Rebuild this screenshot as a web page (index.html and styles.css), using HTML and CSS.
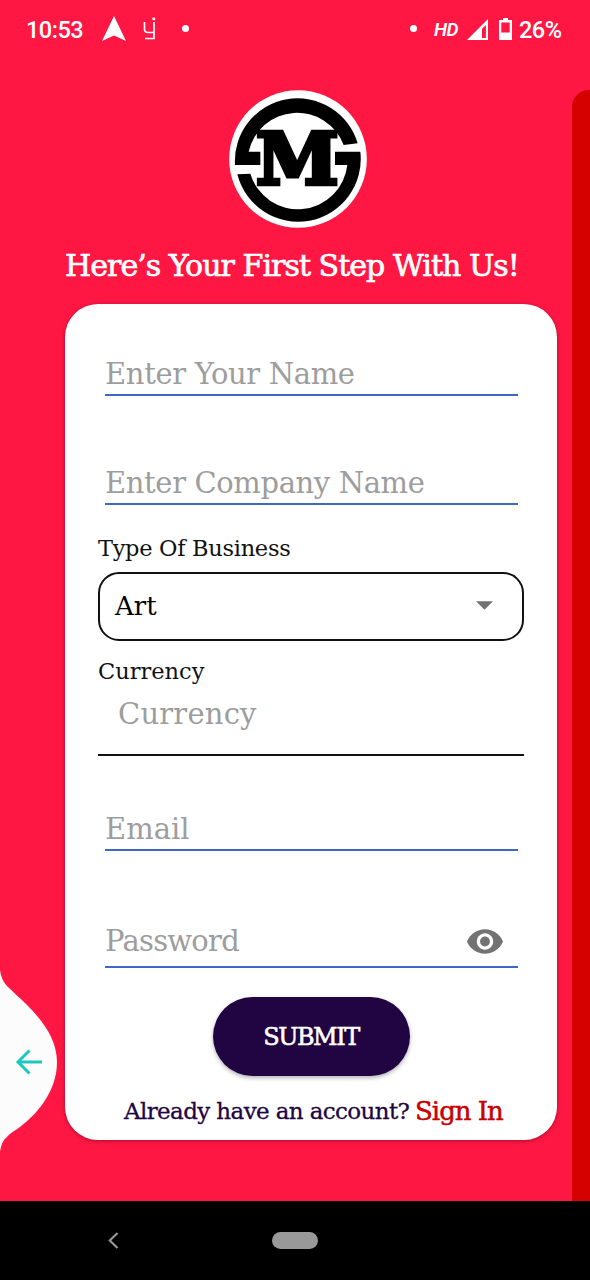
FILE: index.html
```html
<!DOCTYPE html>
<html lang="en">
<head>
<meta charset="utf-8">
<title>Sign Up</title>
<link rel="stylesheet" href="styles.css">
</head>
<body>
<div class="screen">
  <header class="status">
    <span class="clock">10:53</span>
    <svg class="nav-icon" viewBox="0 0 26 26"><path d="M13 0 25 25 13 19.500 1 25Z" fill="#fff"/></svg>
    <svg class="app-icon" viewBox="0 0 14 24" fill="none" stroke="#fff" stroke-width="1.700"><path d="M1.500 5V12Q1.500 15.500 5 15.500H11M11 5V21.500H2"/><circle cx="10.800" cy="1.800" r="1.500" fill="#fff" stroke="none"/></svg>
    <span class="dot"></span>
    <span class="spacer"></span>
    <span class="dot"></span>
    <span class="hd">HD</span>
    <svg class="signal" viewBox="0 0 21 21"><path d="M21 0V21H0Z" fill="#fff"/><path d="M18.900 6V18.900H15V9.800Z" fill="#ff1744"/></svg>
    <svg class="battery" viewBox="0 0 13 22"><path d="M4 0H9V2H13V22H0V2H4Z" fill="#fff"/><path d="M2.300 4.500H10.700V14.500H2.300Z" fill="#ff1744"/></svg>
    <span class="percent">26%</span>
  </header>
  <div class="body">
    <main class="main">
      <svg class="logo" viewBox="28 30 414 414">
        <circle cx="235" cy="237" r="206.500" fill="#fff"/>
        <path d="M414 190A188 188 0 0 0 46 255H122V215H87A149 149 0 0 1 372 195Z"/>
        <path d="M53 283A188 188 0 0 0 422 215H346V255H383A149 149 0 0 1 92 281Z"/>
        <text class="logo-letter" x="109" y="313" textLength="248" lengthAdjust="spacingAndGlyphs">M</text>
      </svg>
      <h1 class="title"><span>Here’s Your First Step With Us!</span></h1>
      <form class="card">
        <div class="field name"><span class="ph t-name">Enter Your Name</span></div>
        <div class="field company"><span class="ph t-company">Enter Company Name</span></div>
        <div class="label business"><span>Type Of Business</span></div>
        <div class="select"><span>Art</span><svg viewBox="0 0 16 8"><path d="M0 0H16L8 8Z" fill="#737373"/></svg></div>
        <div class="label currency-label"><span>Currency</span></div>
        <div class="currency"><span class="ph t-currency">Currency</span></div>
        <div class="field email"><span class="ph t-email">Email</span></div>
        <div class="field password"><span class="ph t-password">Password</span>
          <svg class="eye" viewBox="1 4.500 22 15"><path fill="#737373" d="M12 4.500C7 4.500 2.730 7.610 1 12c1.730 4.390 6 7.500 11 7.500s9.270-3.110 11-7.500c-1.730-4.390-6-7.500-11-7.500zM12 17c-2.760 0-5-2.240-5-5s2.240-5 5-5 5 2.240 5 5-2.240 5-5 5zm0-8c-1.660 0-3 1.340-3 3s1.340 3 3 3 3-1.340 3-3-1.340-3-3-3z"/></svg>
        </div>
        <div class="submit"><span>SUBMIT</span></div>
        <div class="foot"><span class="already">Already have an account?</span><span class="signin">Sign In</span></div>
      </form>
    </main>
    <aside class="strip"></aside>
  </div>
  <nav class="navbar">
    <svg class="back" viewBox="0 0 10 16"><path d="M8.800 1 1.500 8 8.800 15" fill="none" stroke="#999" stroke-width="2"/></svg>
    <span class="home"></span>
  </nav>
  <svg class="swipe" viewBox="0 0 60 184"><path d="M0 0C1 8 4 13 8 17C14 23 20 28 27 35C42 50 57 69 57 92C57 122 36 145 20 157C13 162 9 164 7 167C2 171 1 176 0 182Z" fill="#fcfcfc"/><path d="M42 92H18M29.500 80.500 18 92 29.500 103.500" fill="none" stroke="#1cc8bd" stroke-width="3"/></svg>
</div>
</body>
</html>
```
FILE: styles.css
```css
* { box-sizing: border-box; }
body { margin: 0; }
.screen {
  position: relative;
  width: 590px;
  height: 1280px;
  display: flex;
  flex-direction: column;
  overflow: hidden;
  background: #ff1744;
  font-family: "DejaVu Serif", serif;
  white-space: nowrap;
}
.screen svg { display: block; flex: none; }

.status {
  height: 90px;
  padding: 0 28px 30px 26px;
  display: flex;
  align-items: center;
  color: #fff;
  font: 500 24px Roboto, sans-serif;
}
.clock { width: 75px; font-size: 23.500px; letter-spacing: -0.500px; }
.nav-icon { width: 26px; height: 26px; margin-top: -3px; }
.app-icon { width: 14px; height: 24px; margin: -3px 0 0 16px; }
.dot { width: 7px; height: 7px; border-radius: 50%; background: #fff; margin: -3px 0 0 25px; }
.spacer { flex: 1; }
.hd { margin-left: 17px; font-size: 19px; font-weight: 600; font-style: italic; width: 33px; margin-top: -2px; letter-spacing: -0.500px; }
.signal { width: 21px; height: 21px; margin-top: -2px; }
.battery { width: 13px; height: 22px; margin: -2px 7px 0 11px; }
.percent { font-size: 23.500px; width: 43px; letter-spacing: -0.500px; }

.body { flex: 1; display: grid; grid-template-columns: 572px 18px; }
.strip { background: #d50000; border-radius: 17px 0 0 0; }
.main { padding-left: 65px; display: flex; flex-direction: column; }
.logo { width: 138px; height: 138px; margin-left: 164px; }
.logo-letter { font: bold 213px "DejaVu Serif", serif; stroke: #000; stroke-width: 13px; }
.title {
  margin: 16px 0 17px;
  height: 43px;
  line-height: 43px;
  font-size: 30px;
  font-weight: 400;
  color: #fff;
  letter-spacing: -0.950px;
  -webkit-text-stroke: 0.700px #fff;
}

.card {
  width: 492px;
  height: 836px;
  border-radius: 33px;
  background: #fff;
  box-shadow: 0 1px 4px rgba(0, 0, 0, 0.35);
  padding: 0 33px 0 33px;
  display: flex;
  flex-direction: column;
}
.field {
  margin: 0 6px 0 7px;
  border-bottom: 2px solid #3f68c5;
  display: flex;
  justify-content: space-between;
  align-items: flex-end;
  flex: none;
}
.ph { color: #9d9d9d; font-size: 29px; line-height: 40px; }
.name { height: 92px; }
.company { height: 109px; }
.t-name { letter-spacing: -0.350px; }
.t-company { letter-spacing: -0.380px; }
.t-password { padding-bottom: 5px; letter-spacing: -0.750px; }
.t-currency { letter-spacing: 0.200px; }
.label { color: #111; font-size: 22.500px; line-height: 30px; }
.business { margin-top: 28px; height: 39px; letter-spacing: -0.300px; }
.select {
  height: 69px;
  border: 2px solid #111;
  border-radius: 21px;
  padding: 0 29px 2px 15px;
  display: flex;
  align-items: center;
  justify-content: space-between;
  font-size: 26px;
}
.select svg { width: 17px; height: 9px; }
.currency-label { margin-top: 15px; height: 31px; }
.currency { height: 69px; border-bottom: 2px solid #111; padding: 7px 0 0 20px; }
.email { height: 95px; }
.password { height: 117px; }
.eye { width: 36px; height: 25px; margin: 0 15px 12px 0; }
.submit {
  width: 197px;
  height: 79px;
  margin: 29px auto 0;
  border-radius: 40px;
  background: #210442;
  color: #fff;
  display: flex;
  align-items: center;
  justify-content: center;
  font-size: 24px;
  -webkit-text-stroke: 0.600px #fff;
  letter-spacing: -1.500px;
  box-shadow: 0 2px 4px rgba(0, 0, 0, 0.300);
}
.foot { height: 40px; margin-top: 15px; padding-left: 26px; display: flex; align-items: center; }
.already { width: 291px; font-size: 23px; color: #210442; -webkit-text-stroke: 0.300px; letter-spacing: -0.620px; }
.signin { font-size: 26px; color: #c90000; -webkit-text-stroke: 0.500px; letter-spacing: -1px; }

.navbar { height: 79px; background: #000; display: flex; align-items: center; padding-left: 108px; }
.back { width: 11px; height: 17px; }
.home { width: 46px; height: 17px; margin-left: 153px; border-radius: 9px; background: #999; }
.swipe { position: absolute; left: 0; top: 970px; width: 60px; height: 184px; }
```
